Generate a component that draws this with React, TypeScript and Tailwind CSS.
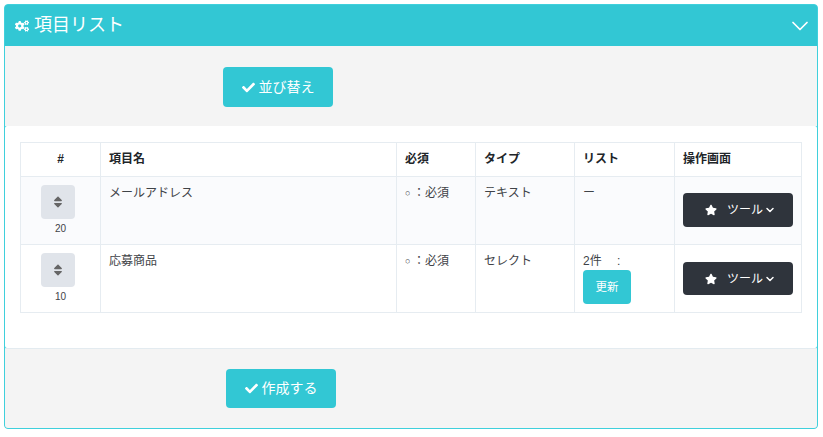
import { ChevronDown } from "lucide-react";
import { FaCheck, FaCogs, FaSort, FaStar } from "react-icons/fa";

const FONT = "font-['Liberation_Sans','Noto_Sans_CJK_JP',sans-serif]";

type Row = {
    sort: number;
    name: string;
    type: string;
    list: string;
    hasUpdate: boolean;
};

const rows: Row[] = [
    {sort: 20, name: "メールアドレス", type: "テキスト", list: "ー", hasUpdate: false},
    {sort: 10, name: "応募商品", type: "セレクト", list: "2件 　:", hasUpdate: true},
];

const SubmitButton = ({label, className}: { label: string; className: string }) => (
    <button
        className={`flex w-[110px] items-center justify-center gap-1 rounded bg-[#32c7d4] text-[14px] text-white ${className}`}>
        <FaCheck className="text-[13px]"/>
        {label}
    </button>
);

const ToolButton = ({className}: { className: string }) => (
    <button
        className={`flex w-[110px] items-center rounded bg-[#2f343c] pl-[22px] text-[12px] text-white ${className}`}>
        <FaStar className="mr-[10px] text-[12px]"/>
        ツール
        <ChevronDown size={12} strokeWidth={3} className="ml-px"/>
    </button>
);

export default function App() {
    return (
        <div className={`${FONT} min-h-[437px] bg-white px-1 pt-1 text-[12px] text-[#3f4348]`}>
            <div className="h-[425px] w-[814px] overflow-hidden rounded border border-[#3fd0dc] bg-[#3fd0dc]">
                <div className="flex h-[41px] items-center justify-between bg-[#32c7d4] pl-[10px] pr-[3px] text-white">
                    <div className="flex items-center gap-[5px] text-[18px]">
                        <FaCogs className="text-[14px]"/>
                        項目リスト
                    </div>
                    <ChevronDown size={28} strokeWidth={1.5}/>
                </div>

                <div className="h-[80px] bg-[#f4f4f4] pl-[218px] pt-[21px]">
                    <SubmitButton label="並び替え" className="h-10"/>
                </div>

                <div className="h-[222px] rounded-[2px] bg-white px-[15px] pt-4">
                    <table className="w-[781px] table-fixed border-collapse">
                        <colgroup>
                            <col className="w-[80px]"/>
                            <col className="w-[296px]"/>
                            <col className="w-[79px]"/>
                            <col className="w-[99px]"/>
                            <col className="w-[100px]"/>
                            <col className="w-[127px]"/>
                        </colgroup>
                        <thead>
                        <tr className="h-[34px] text-left text-[12px] font-bold text-[#212529]">
                            <th className="border border-[#e6ecf1] pb-px text-center">#</th>
                            <th className="border border-[#e6ecf1] px-2 pb-px">項目名</th>
                            <th className="border border-[#e6ecf1] px-2 pb-px">必須</th>
                            <th className="border border-[#e6ecf1] px-2 pb-px">タイプ</th>
                            <th className="border border-[#e6ecf1] px-2 pb-px">リスト</th>
                            <th className="border border-[#e6ecf1] px-2 pb-px">操作画面</th>
                        </tr>
                        </thead>
                        <tbody>
                        {rows.map((row, index) => (
                            <tr key={index} className={`h-[68px] ${index === 0 ? "bg-[#fafbfd]" : "bg-white"}`}>
                                <td className="border border-[#e6ecf1] pt-2 align-top">
                                    <div
                                        className="ml-5 flex h-[34px] w-[34px] items-center justify-center rounded bg-[#e0e4ea] text-[#666]">
                                        <FaSort className="text-[14px]"/>
                                    </div>
                                    <div className="mt-[3px] text-center text-[10px] leading-[14px]">{row.sort}</div>
                                </td>
                                <td className="border border-[#e6ecf1] px-2 pt-2 align-top leading-[17px]">{row.name}</td>
                                <td className="border border-[#e6ecf1] px-2 pt-2 align-top leading-[17px]">
                                    <span className="inline-block w-2 align-[1px] text-[9px] leading-none">○</span>：必須
                                </td>
                                <td className="border border-[#e6ecf1] px-2 pt-2 align-top leading-[17px]">{row.type}</td>
                                <td className="border border-[#e6ecf1] px-2 pt-2 align-top leading-[17px]">
                                    <div className="whitespace-pre">{row.list}</div>
                                    {row.hasUpdate && (
                                        <button
                                            className="block h-[34px] w-[48px] rounded bg-[#32c7d4] text-[11.5px] text-white">
                                            更新
                                        </button>
                                    )}
                                </td>
                                <td className="border border-[#e6ecf1] px-2 align-top">
                                    <ToolButton className={index === 0 ? "mt-4 h-[34px]" : "mt-[17px] h-[33px]"}/>
                                </td>
                            </tr>
                        ))}
                        </tbody>
                    </table>
                </div>

                <div className="h-[80px] border-t border-[#e3ebf0] bg-[#f4f4f4] pl-[221px] pt-5">
                    <SubmitButton label="作成する" className="h-[39px]"/>
                </div>
            </div>
        </div>
    );
}
